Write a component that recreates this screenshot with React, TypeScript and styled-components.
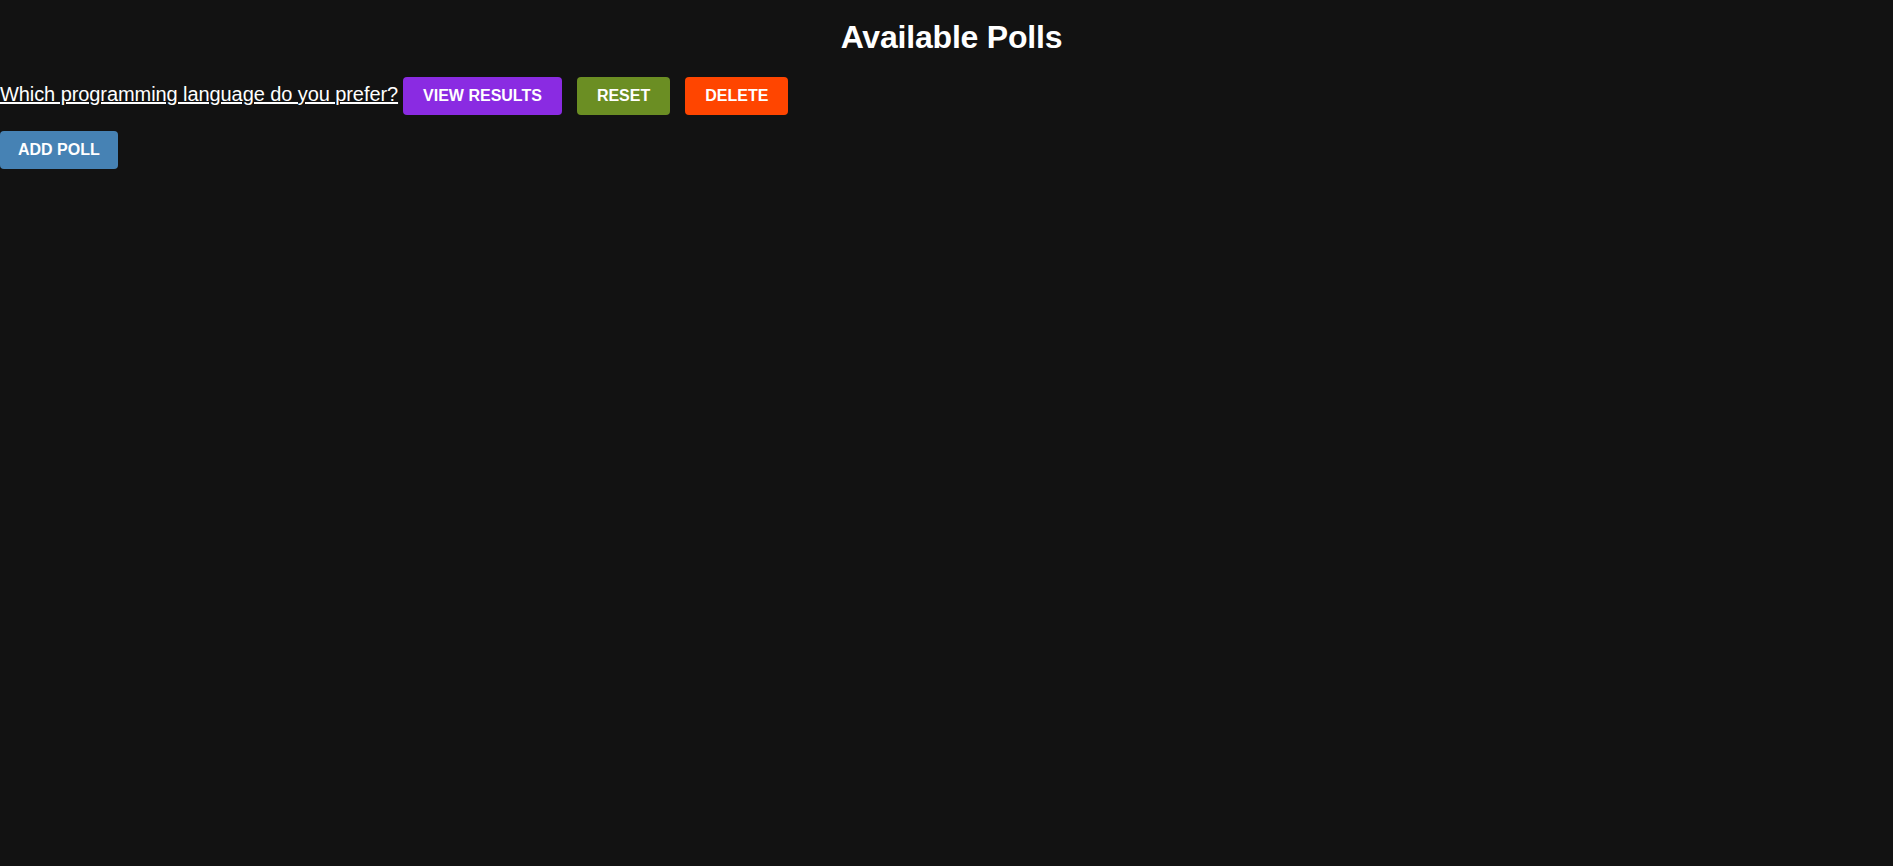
import React from "react";
import styled, { createGlobalStyle } from "styled-components";

const GlobalStyle = createGlobalStyle`
  html, body {
    margin: 0;
    padding: 0;
    background: #121212;
    color: #ffffff;
    font-family: "Liberation Sans", Arial, sans-serif;
  }
  body { min-height: 100vh; }
`;

const Page = styled.div`
  display: flex;
  flex-direction: column;
  min-height: 100vh;
  background: #121212;
`;

const Title = styled.h1`
  margin: 19px 0 21px;
  padding-left: 10px;
  text-align: center;
  font-size: 32px;
  font-weight: bold;
  line-height: 37px;
  letter-spacing: -0.2px;
  color: #ffffff;
`;

const PollList = styled.div`
  display: flex;
  flex-direction: column;
  gap: 16px;
  align-items: flex-start;
`;

const PollRow = styled.div`
  display: flex;
  align-items: baseline;
`;

const PollLink = styled.a`
  color: #ffffff;
  font-size: 20px;
  letter-spacing: -0.08px;
  text-decoration: underline;
  margin-right: 5px;
  cursor: pointer;
`;

const ActionButton = styled.button<{ $bg: string; $gap?: number; $padX?: number }>`
  font-family: "Liberation Sans", Arial, sans-serif;
  font-size: 16px;
  font-weight: bold;
  line-height: 18px;
  text-transform: uppercase;
  color: #ffffff;
  background: ${(p) => p.$bg};
  border: none;
  border-radius: 4px;
  padding: 10px ${(p) => p.$padX ?? 20}px;
  margin-left: ${(p) => p.$gap ?? 0}px;
  cursor: pointer;
`;

export default function App() {
  return (
    <>
      <GlobalStyle />
      <Page>
        <Title>Available Polls</Title>
        <PollList>
          <PollRow>
            <PollLink>Which programming language do you prefer?</PollLink>
            <ActionButton $bg="#8a2be2">View Results</ActionButton>
            <ActionButton $bg="#6b8e23" $gap={15}>Reset</ActionButton>
            <ActionButton $bg="#ff4500" $gap={15}>Delete</ActionButton>
          </PollRow>
          <ActionButton $bg="#4682b4" $padX={18}>Add Poll</ActionButton>
        </PollList>
      </Page>
    </>
  );
}
